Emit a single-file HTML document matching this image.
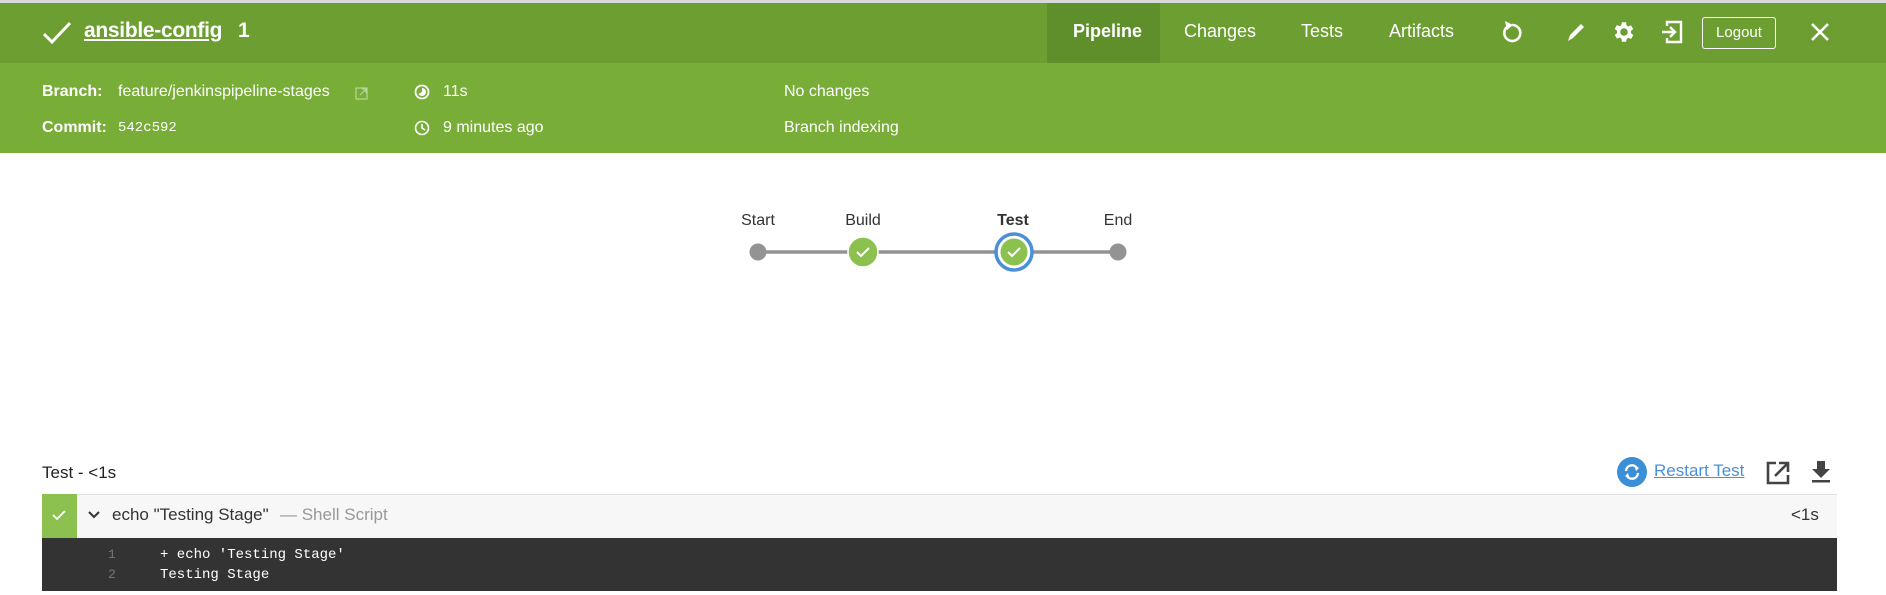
<!DOCTYPE html>
<html><head><meta charset="utf-8"><style>
*{margin:0;padding:0;box-sizing:border-box}
body{width:1886px;height:595px;background:#fff;font-family:"Liberation Sans",sans-serif;position:relative;overflow:hidden;color:#333}
.a{position:absolute;white-space:nowrap}
#top{position:absolute;left:0;top:0;width:1886px;height:3px;background:#d8d8d8}
#h1{position:absolute;left:0;top:3px;width:1886px;height:60px;background:#6c9e31}
#h2{position:absolute;left:0;top:63px;width:1886px;height:90px;background:#78ad37}
.w{color:#fff}
.nav{font-size:18px;color:#fff;top:21px}
.inf{font-size:16px;color:#fff}
.lbl{font-size:16px;color:#333;transform:translateX(-50%)}
</style></head><body>
<div id="top"></div>
<div id="h1"></div>
<div id="h2"></div>
<svg class="a" style="left:42px;top:20px" width="30" height="26" viewBox="0 0 30 26"><path d="M2 14 L10 22 L28 3" stroke="#fff" stroke-width="3" fill="none"/></svg>
<div class="a w" style="left:84px;top:19px;font-size:21px;font-weight:bold;text-decoration:underline;letter-spacing:-0.3px">ansible-config</div>
<div class="a w" style="left:238px;top:19px;font-size:21px;font-weight:bold">1</div>
<div class="a" style="left:1047px;top:3px;width:113px;height:60px;background:#5e8f2a"></div>
<div class="a nav" style="left:1073px;font-weight:bold">Pipeline</div>
<div class="a nav" style="left:1184px">Changes</div>
<div class="a nav" style="left:1301px">Tests</div>
<div class="a nav" style="left:1389px">Artifacts</div>
<svg class="a" style="left:1500px;top:19px" width="24" height="26" viewBox="0 0 24 26"><path d="M7 8 A8 8 0 1 0 12 6" stroke="#fff" stroke-width="2.6" fill="none"/><path d="M5 2 L13 6 L7 11 Z" fill="#fff"/></svg>
<svg class="a" style="left:1564px;top:20px" width="24" height="24" viewBox="0 0 24 24"><path d="M4 21 L6 15 L17 4 L20 7 L9 18 Z" fill="#fff"/></svg>
<svg class="a" style="left:1611px;top:19px" width="26" height="26" viewBox="0 0 24 24"><path fill="#fff" d="M19.4 13a7.5 7.5 0 000-2l2.1-1.6-2-3.5-2.5 1a7 7 0 00-1.7-1L15 3h-4l-.4 2.6a7 7 0 00-1.7 1l-2.5-1-2 3.5L6.6 11a7.5 7.5 0 000 2l-2.1 1.6 2 3.5 2.5-1a7 7 0 001.7 1L11 21h4l.4-2.6a7 7 0 001.7-1l2.5 1 2-3.5zM13 15.5a3.5 3.5 0 110-7 3.5 3.5 0 010 7z" transform="translate(-1 0)"/></svg>
<svg class="a" style="left:1659px;top:19px" width="26" height="26" viewBox="0 0 26 26"><path d="M8 7 V3 H22 V23 H8 V19" stroke="#fff" stroke-width="2.4" fill="none"/><path d="M3 13 H16 M11 8 L16 13 L11 18" stroke="#fff" stroke-width="2.4" fill="none"/></svg>
<div class="a" style="left:1702px;top:17px;width:74px;height:32px;border:1px solid #fff;border-radius:3px;color:#fff;font-size:15px;text-align:center;line-height:30px">Logout</div>
<svg class="a" style="left:1810px;top:22px" width="20" height="20" viewBox="0 0 20 20"><path d="M2 2 L18 18 M18 2 L2 18" stroke="#fff" stroke-width="2.6"/></svg>

<div class="a inf" style="left:42px;top:83px;font-weight:bold">Branch:</div>
<div class="a inf" style="left:118px;top:83px">feature/jenkinspipeline-stages</div>
<svg class="a" style="left:355px;top:87px" width="13" height="13" viewBox="0 0 13 13"><rect x="1" y="1" width="11" height="11" fill="none" stroke="#b9d89a" stroke-width="1.2"/><path d="M5 8 L11 2 M7 2 H11 V6" stroke="#b9d89a" stroke-width="1.2" fill="none"/></svg>
<div class="a inf" style="left:42px;top:119px;font-weight:bold">Commit:</div>
<div class="a inf" style="left:118px;top:120px;font-family:'Liberation Mono',monospace;font-size:14px">542c592</div>
<svg class="a" style="left:414px;top:84px" width="16" height="16" viewBox="0 0 16 16"><circle cx="8" cy="8" r="6.5" fill="none" stroke="#fff" stroke-width="1.8"/><path d="M8 4 A4 4 0 1 1 4.5 10 L8 8Z" fill="#fff"/></svg>
<div class="a inf" style="left:443px;top:83px">11s</div>
<svg class="a" style="left:414px;top:120px" width="16" height="16" viewBox="0 0 16 16"><circle cx="8" cy="8" r="6.5" fill="none" stroke="#fff" stroke-width="1.6"/><path d="M8 4 V8 L11 10" stroke="#fff" stroke-width="1.6" fill="none"/></svg>
<div class="a inf" style="left:443px;top:119px">9 minutes ago</div>
<div class="a inf" style="left:784px;top:83px">No changes</div>
<div class="a inf" style="left:784px;top:119px">Branch indexing</div>

<svg class="a" style="left:0;top:0" width="1886" height="300">
<line x1="758" y1="252" x2="1118" y2="252" stroke="#949393" stroke-width="3.5"/>
<circle cx="758" cy="252" r="8.5" fill="#949393"/>
<circle cx="1118" cy="252" r="8.5" fill="#949393"/>
<circle cx="863" cy="252" r="15" fill="#8cc04f" stroke="#fff" stroke-width="1.5"/>
<circle cx="1014" cy="252" r="18" fill="#fff" stroke="#4a90d9" stroke-width="3.5"/>
<circle cx="1014" cy="252" r="13.5" fill="#8cc04f"/>
<path d="M857 252 L861 256 L869 248" stroke="#fff" stroke-width="2" fill="none"/>
<path d="M1008 252 L1012 256 L1020 248" stroke="#fff" stroke-width="2" fill="none"/>
</svg>
<div class="a lbl" style="left:758px;top:212px">Start</div>
<div class="a lbl" style="left:863px;top:212px">Build</div>
<div class="a lbl" style="left:1013px;top:212px;font-weight:bold">Test</div>
<div class="a lbl" style="left:1118px;top:212px">End</div>

<div class="a" style="left:42px;top:463px;font-size:17px;color:#222">Test - &lt;1s</div>
<svg class="a" style="left:1617px;top:457px" width="30" height="30" viewBox="0 0 30 30"><circle cx="15" cy="15" r="15" fill="#3a8fd6"/><path d="M9 14 A6 6 0 0 1 20 11 M21 16 A6 6 0 0 1 10 19" stroke="#fff" stroke-width="2.4" fill="none"/><path d="M17 8 L22 11 L19 14Z M13 22 L8 19 L11 16Z" fill="#fff"/></svg>
<div class="a" style="left:1654px;top:461px;font-size:17px;color:#4a90d9;text-decoration:underline">Restart Test</div>
<svg class="a" style="left:1766px;top:461px" width="24" height="24" viewBox="0 0 24 24"><path d="M10 2 H2 V22 H22 V14" stroke="#444" stroke-width="2.6" fill="none"/><path d="M9 15 L21 3 M13 2 H22 V11" stroke="#444" stroke-width="2.6" fill="none"/></svg>
<svg class="a" style="left:1811px;top:461px" width="20" height="22" viewBox="0 0 20 22"><path d="M6 0 H14 V8 H19 L10 17 L1 8 H6Z" fill="#444"/><rect x="1" y="19" width="18" height="2.5" fill="#444"/></svg>

<div class="a" style="left:42px;top:494px;width:1795px;height:44px;background:#f7f7f7;border-top:1px solid #e2e2e2"></div>
<div class="a" style="left:42px;top:494px;width:35px;height:44px;background:#8cc04f"></div>
<svg class="a" style="left:51px;top:508px" width="16" height="14" viewBox="0 0 16 14"><path d="M2 7 L6 11 L14 3" stroke="#fff" stroke-width="1.8" fill="none"/></svg>
<svg class="a" style="left:88px;top:510px" width="12" height="10" viewBox="0 0 12 10"><path d="M1 2 L6 7 L11 2" stroke="#333" stroke-width="2" fill="none"/></svg>
<div class="a" style="left:112px;top:505px;font-size:17px;color:#333">echo "Testing Stage"</div>
<div class="a" style="left:280px;top:505px;font-size:17px;color:#999">— Shell Script</div>
<div class="a" style="left:1791px;top:505px;font-size:17px;color:#333">&lt;1s</div>
<div class="a" style="left:42px;top:538px;width:1795px;height:53px;background:#333"></div>
<div class="a" style="left:108px;top:545px;font-family:'Liberation Mono',monospace;font-size:13px;color:#777;line-height:20px">1<br>2</div>
<div class="a" style="left:160px;top:545px;font-family:'Liberation Mono',monospace;font-size:14px;color:#fff;line-height:20px">+ echo 'Testing Stage'<br>Testing Stage</div>
</body></html>
